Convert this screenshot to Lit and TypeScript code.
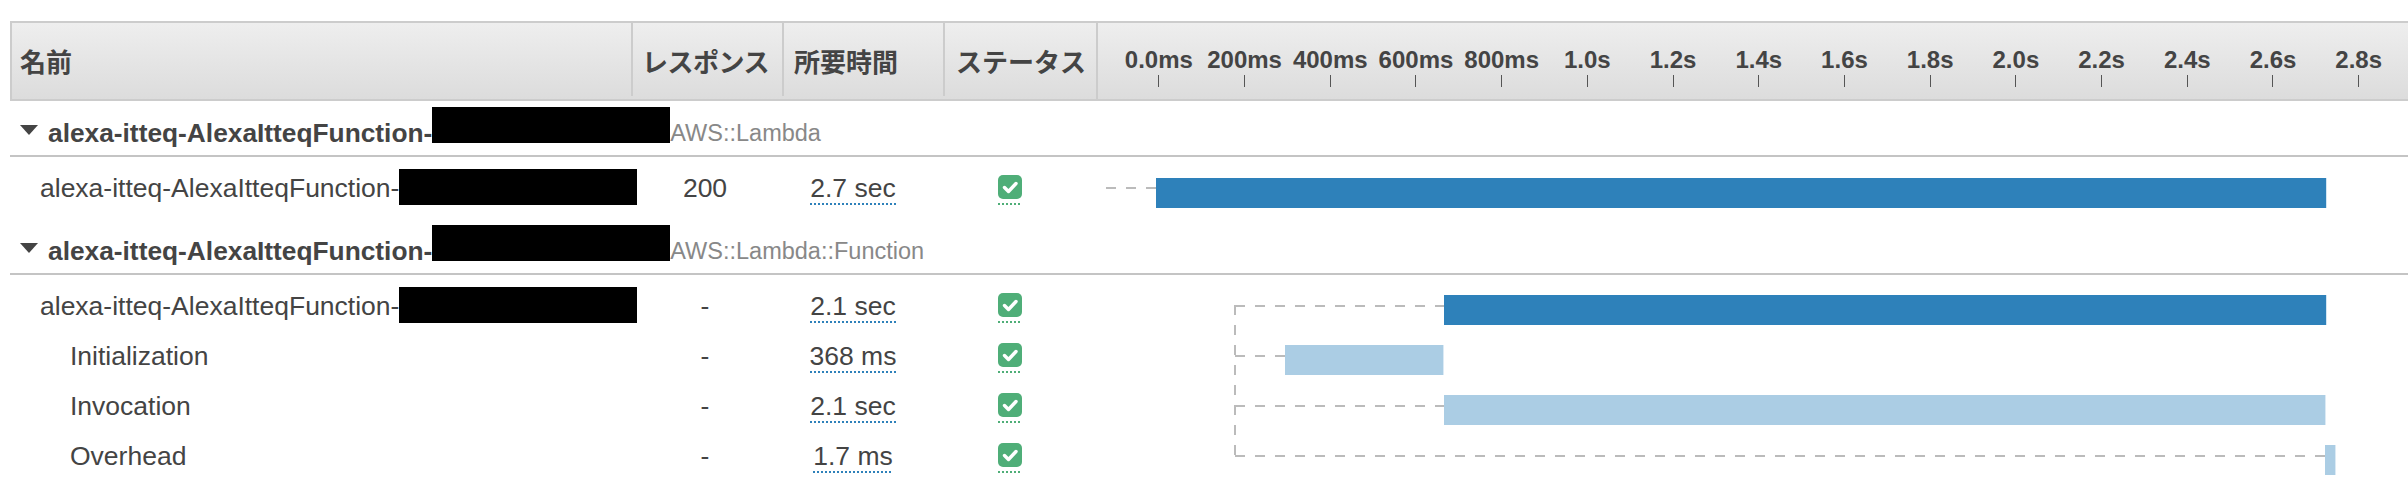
import { LitElement, html, css, svg } from "lit";
import { customElement } from "lit/decorators.js";

const TICKS = ["0.0ms","200ms","400ms","600ms","800ms","1.0s","1.2s","1.4s","1.6s","1.8s","2.0s","2.2s","2.4s","2.6s","2.8s"];

interface Row { name: string; redact?: boolean; sub?: boolean; resp: string; dur: string; left: number; width: number; light?: boolean; first?: boolean; }
interface Group { name: string; type: string; rows: Row[]; }

// bar coordinates are relative to the timeline column start (x = 1094)
const GROUPS: Group[] = [
  { name: "alexa-itteq-AlexaItteqFunction-", type: "AWS::Lambda", rows: [
    { name: "alexa-itteq-AlexaItteqFunction-", redact: true, resp: "200", dur: "2.7 sec", left: 62, width: 1171, first: true },
  ]},
  { name: "alexa-itteq-AlexaItteqFunction-", type: "AWS::Lambda::Function", rows: [
    { name: "alexa-itteq-AlexaItteqFunction-", redact: true, resp: "-", dur: "2.1 sec", left: 350, width: 883 },
    { name: "Initialization", sub: true, resp: "-", dur: "368 ms", left: 191, width: 159, light: true },
    { name: "Invocation", sub: true, resp: "-", dur: "2.1 sec", left: 350, width: 882, light: true },
    { name: "Overhead", sub: true, resp: "-", dur: "1.7 ms", left: 1231, width: 11, light: true },
  ]},
];

const LINES: [number, number, number, number][] = [
  [1106, 188, 1156, 188],
  [1235, 305, 1235, 457],
  [1235, 306, 1444, 306],
  [1235, 356, 1285, 356],
  [1235, 406, 1444, 406],
  [1235, 456, 2325, 456],
];

@customElement("app-root")
export class AppRoot extends LitElement {
  static styles = css`
    :host { display: block; position: relative; width: 2408px; height: 494px; background: #fff; overflow: hidden;
      font-family: "Liberation Sans", Arial, "Noto Sans CJK JP", sans-serif; color: #444; }
    .page { padding: 21px 0 0 10px; }
    .head { display: grid; grid-template-columns: 621px 151px 161px 153px 1fr; height: 80px; box-sizing: border-box;
      border: solid #ccc; border-width: 2px 0 2px 2px;
      background: linear-gradient(#eee, #dcdcdc); font-weight: 700; font-size: 26px; font-family: "Liberation Sans", "Noto Sans CJK JP", sans-serif; }
    .hc { display: flex; align-items: center; box-sizing: border-box; padding-left: 10px; height: 73px; border-right: 2px solid #ccc; white-space: nowrap; padding-top: 2px; }
    .hc.name { padding-left: 8px; }
    .hc.resp { padding-left: 9px; letter-spacing: -0.5px; }
    .hc.status { height: 76px; padding-bottom: 3px; padding-left: 11px; }
    .axis { display: flex; padding-left: 18px; }
    .tick { width: 85.714px; flex: none; display: flex; flex-direction: column; align-items: center; white-space: nowrap; font-size: 24px; padding-top: 22px; }
    .tick span { height: 29px; line-height: 29px; }
    .tick i { display: block; width: 1px; height: 12px; margin-top: 1px; background: #555; }
    .group { display: flex; height: 56px; box-sizing: border-box; border-bottom: 2px solid #c4c4c4; }
    .group + .body { padding-bottom: 6px; }
    .tri { flex: none; margin: 24px 10px 0 10px; }
    .gname { font-weight: 700; font-size: 26.3px; line-height: 40px; padding-top: 12px; white-space: nowrap; height: 40px; }
    .gtype { font-size: 23.5px; line-height: 40px; padding-top: 12px; color: #888; white-space: nowrap; }
    .redact { flex: none; display: block; background: #000; width: 238px; height: 36px; margin-top: 6px; }
    .body { padding-top: 6px; }
    .row { display: grid; grid-template-columns: 620px 150px 146px 168px 1fr; height: 50px; }
    .cname { display: flex; padding-left: 30px; font-size: 26.5px; line-height: 51px; white-space: nowrap; }
    .cname.sub { padding-left: 60px; }
    .cname .redact { margin-top: 6px; }
    .cc { font-size: 26.5px; display: flex; justify-content: center; line-height: 50px; }
    .dur { display: block; line-height: 30px; height: 32px; margin-top: 10px; white-space: nowrap;
      background: repeating-linear-gradient(90deg, #2e81ba 0 2px, transparent 2px 4px) left bottom / 100% 2px no-repeat; }
    .stat { display: flex; flex-direction: column; width: 24px; height: 30px; margin-top: 12px; }
    .stat svg { display: block; }
    .stat i { display: block; height: 2px; margin-top: 4px; background: repeating-linear-gradient(90deg, #4fae78 0 2px, transparent 2px 4px); }
    .tl { padding-top: 14px; }
    .tl.first { padding-top: 15px; }
    .bar { height: 30px; box-sizing: border-box; background: #2e81ba; border-right: 1px solid #d3e6f3; }
    .bar.light { background: #abcde4; border-right-color: #dbeaf5; }
    .lines { position: absolute; left: 0; top: 0; pointer-events: none; }
    .lines line { stroke: #bbb; stroke-width: 2; stroke-dasharray: 10 10; }
  `;

  private check() {
    return html`<svg width="24" height="24" viewBox="0 0 24 24"><rect width="24" height="24" rx="5" fill="#4fae78"/><path d="M6.5 12.5l4 4 7.5-8" fill="none" stroke="#fff" stroke-width="3.4" stroke-linecap="round" stroke-linejoin="round"/></svg>`;
  }

  render() {
    return html`<div class="page">
      <div class="head">
        <div class="hc name">名前</div>
        <div class="hc resp">レスポンス</div>
        <div class="hc">所要時間</div>
        <div class="hc status">ステータス</div>
        <div class="axis">${TICKS.map(t => html`<div class="tick"><span>${t}</span><i></i></div>`)}</div>
      </div>
      ${GROUPS.map(g => html`
        <div class="group">
          <svg class="tri" width="18" height="10" viewBox="0 0 18 10"><polygon points="0,0 18,0 9,10" fill="#444"/></svg>
          <div class="gname">${g.name}</div><span class="redact"></span><div class="gtype">${g.type}</div>
        </div>
        <div class="body">
          ${g.rows.map(r => html`
            <div class="row">
              <div class="cname ${r.sub ? "sub" : ""}">${r.name}${r.redact ? html`<span class="redact"></span>` : ""}</div>
              <div class="cc">${r.resp}</div>
              <div class="cc"><span class="dur">${r.dur}</span></div>
              <div class="cc"><div class="stat">${this.check()}<i></i></div></div>
              <div class="tl ${r.first ? "first" : ""}"><div class="bar ${r.light ? "light" : ""}" style="margin-left:${r.left}px;width:${r.width}px"></div></div>
            </div>`)}
        </div>`)}
    </div>
    <svg class="lines" width="2408" height="494">
      ${LINES.map(([a, b, c, d]) => svg`<line x1=${a} y1=${b} x2=${c} y2=${d}></line>`)}
    </svg>`;
  }
}
